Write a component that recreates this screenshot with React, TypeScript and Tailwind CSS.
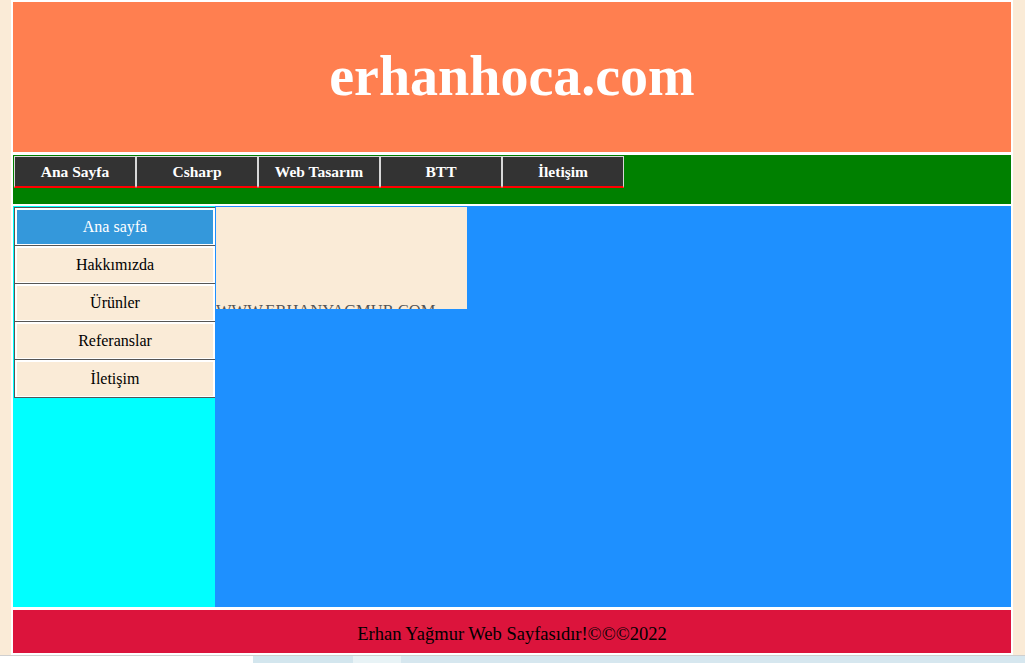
import React from "react";

const navItems = ["Ana Sayfa", "Csharp", "Web Tasarım", "BTT", "İletişim"];
const sideItems = ["Ana sayfa", "Hakkımızda", "Ürünler", "Referanslar", "İletişim"];

export default function App() {
  return (
    <div
      className="w-[1025px] h-[663px] overflow-hidden bg-[#faebd7] flex flex-col"
      style={{ fontFamily: '"Liberation Serif", "Times New Roman", serif' }}
    >
      <div className="ml-[11px] w-[1002px] h-[655px] bg-white p-[2px] flex flex-col">
        <header className="h-[150px] bg-[#ff7f50] flex items-center justify-center">
          <h1 className="text-white font-bold text-[56px] leading-none -mt-[2px]">erhanhoca.com</h1>
        </header>
        <nav className="mt-[3px] h-[49px] bg-[#008000] pt-[1px] pl-[1px] flex items-start">
          {navItems.map((n) => (
            <div
              key={n}
              className="w-[122px] h-[32px] bg-[#333333] border border-[#d8d8d8] border-b-2 border-b-[#ff0000] flex items-center justify-center text-white font-bold text-[15.5px]"
            >
              {n}
            </div>
          ))}
        </nav>
        <div className="mt-[2px] h-[401px] flex">
          <aside className="w-[202px] bg-[#00ffff]">
            <ul className="mt-[1px] ml-[1px] w-[202px] border border-[#555555] border-b-0 bg-white">
              {sideItems.map((s, i) => (
                <li key={s} className="border-b border-[#555555] pt-[2px] px-[2px] pb-[1px]">
                  <div
                    className={`h-[34px] flex items-center justify-center text-[16px] ${
                      i === 0 ? "bg-[#3498db] text-white" : "bg-[#faebd7] text-black"
                    }`}
                  >
                    {s}
                  </div>
                </li>
              ))}
            </ul>
          </aside>
          <main className="flex-1 bg-[#1e90ff]">
            <div className="mt-[1px] ml-[1px] w-[251px] h-[102px] bg-[#faebd7] overflow-hidden pt-[95px] text-[16.5px] text-[#555555] leading-[18px]">
              WWW.ERHANYAGMUR.COM
            </div>
          </main>
        </div>
        <footer className="mt-[3px] flex-1 bg-[#dc143c] flex items-center justify-center pt-[6px]">
          <p className="text-black text-[18.5px]">Erhan Yağmur Web Sayfasıdır!©©©2022</p>
        </footer>
      </div>
      <div className="flex-1 flex border-t border-[#cfcfcf]">
        <div className="w-[253px] bg-white" />
        <div className="w-[100px] bg-[#d3e6ee]" />
        <div className="w-[48px] bg-[#e8f3f6]" />
        <div className="flex-1 bg-[#d6e7ef]" />
      </div>
    </div>
  );
}
